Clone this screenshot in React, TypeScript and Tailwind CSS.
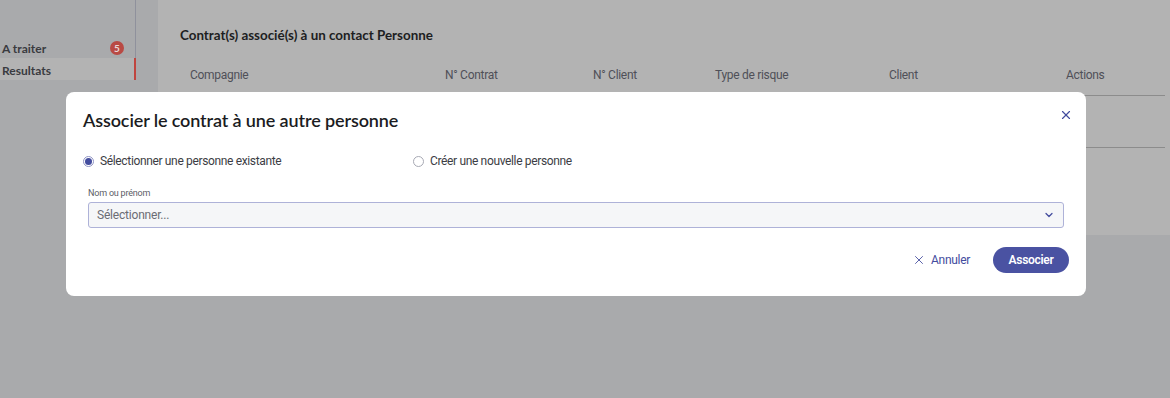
import { X, ChevronDown } from 'lucide-react';

const COLUMNS = [
  { label: 'Compagnie', width: 'w-[255px]' },
  { label: 'N° Contrat', width: 'w-[148px]' },
  { label: 'N° Client', width: 'w-[122px]' },
  { label: 'Type de risque', width: 'w-[174px]' },
  { label: 'Client', width: 'w-[177px]' },
  { label: 'Actions', width: 'flex-1' },
];

function Sidebar() {
  return (
    <aside className="w-[136px] shrink-0 border-r border-[#8f919c] h-[80px] pt-[36px] font-['Lato',sans-serif] text-[12px] font-bold text-[#3a3b40]">
      <div className="h-[22px] flex items-center justify-between pl-[2px] pr-[11px] pt-[2px]">
        <span className="pt-[2px]">A traiter</span>
        <span className="w-[14px] h-[14px] rounded-full bg-[#b94a44] text-[#e9d9d7] text-[10px] flex items-center justify-center">5</span>
      </div>
      <div className="h-[22px] flex items-center pl-[2px] pt-[4px] bg-[#b3b3b3] border-r-2 border-[#c0453f] -mr-px">
        Resultats
      </div>
    </aside>
  );
}

function ContractsCard() {
  return (
    <section className="ml-[22px] flex-1 h-[235px] bg-[#b3b3b3] pl-[22px] pr-[5px] pt-[27px]">
      <h2 className="font-['Lato',sans-serif] text-[13.4px] font-bold text-[#1d1e22] leading-[16px]">
        Contrat(s) associé(s) à un contact Personne
      </h2>
      <div className="mt-[11px] flex h-[42px] items-center border-b border-[#8c8c8c] font-['Roboto',sans-serif] text-[12px] text-[#4f5058] tracking-[-0.3px]">
        {COLUMNS.map((c) => (
          <div key={c.label} className={`${c.width} pl-[10px]`}>{c.label}</div>
        ))}
      </div>
      <div className="h-[52px] border-b border-[#8c8c8c]" />
    </section>
  );
}

function Radio({ checked, label }: { checked?: boolean; label: string }) {
  return (
    <label className="flex items-center gap-[6px]">
      <span className={`w-[11px] h-[11px] rounded-full border flex items-center justify-center ${checked ? 'border-[#8f93c4]' : 'border-[#a7a9b4]'}`}>
        {checked && <span className="w-[7px] h-[7px] rounded-full bg-[#434c9e]" />}
      </span>
      <span>{label}</span>
    </label>
  );
}

function AssociateModal() {
  return (
    <div className="absolute left-[66px] top-[92px] w-[1020px] h-[204px] bg-white rounded-[8px] pl-[17px] pr-[22px] pt-[16px]">
      <button className="absolute right-[13px] top-[16px] text-[#434c9e]">
        <X size={14} strokeWidth={2} />
      </button>
      <h1 className="font-['Lato',sans-serif] text-[18px] font-semibold text-[#1b1c22] leading-[24px] tracking-[-0.12px]">
        Associer le contrat à une autre personne
      </h1>
      <div className="mt-[20px] flex font-['Roboto',sans-serif] text-[12px] text-[#3c3d44] tracking-[-0.35px]">
        <div className="w-[330px]"><Radio checked label="Sélectionner une personne existante" /></div>
        <Radio label="Créer une nouvelle personne" />
      </div>
      <div className="mt-[17px] pl-[5px] font-['Roboto',sans-serif]">
        <div className="text-[9px] text-[#5c5d66] leading-[12px] tracking-[-0.2px]">Nom ou prénom</div>
        <div className="mt-[3px] h-[26px] w-[976px] rounded-[3px] border border-[#aeb2d8] bg-[#f5f6f8] flex items-center justify-between pl-[8px] pr-[8px] text-[12px] text-[#6b6c74] tracking-[-0.2px]">
          <span>Sélectionner...</span>
          <ChevronDown size={12} strokeWidth={2.5} className="text-[#434c9e]" />
        </div>
      </div>
      <div className="mt-[19px] flex justify-end items-center gap-[23px] font-['Roboto',sans-serif] text-[12px]">
        <button className="flex items-center gap-[5px] text-[#434c9e] tracking-[-0.3px]">
          <X size={14} strokeWidth={1.5} />
          Annuler
        </button>
        <button className="h-[26px] w-[76px] rounded-full bg-[#4a52a2] text-white font-semibold tracking-[-0.3px] -mr-[5px]">
          Associer
        </button>
      </div>
    </div>
  );
}

export default function App() {
  return (
    <div className="relative w-[1170px] h-[398px] overflow-hidden bg-[#a9aaac]">
      <div className="flex items-start">
        <Sidebar />
        <ContractsCard />
      </div>
      <AssociateModal />
    </div>
  );
}
